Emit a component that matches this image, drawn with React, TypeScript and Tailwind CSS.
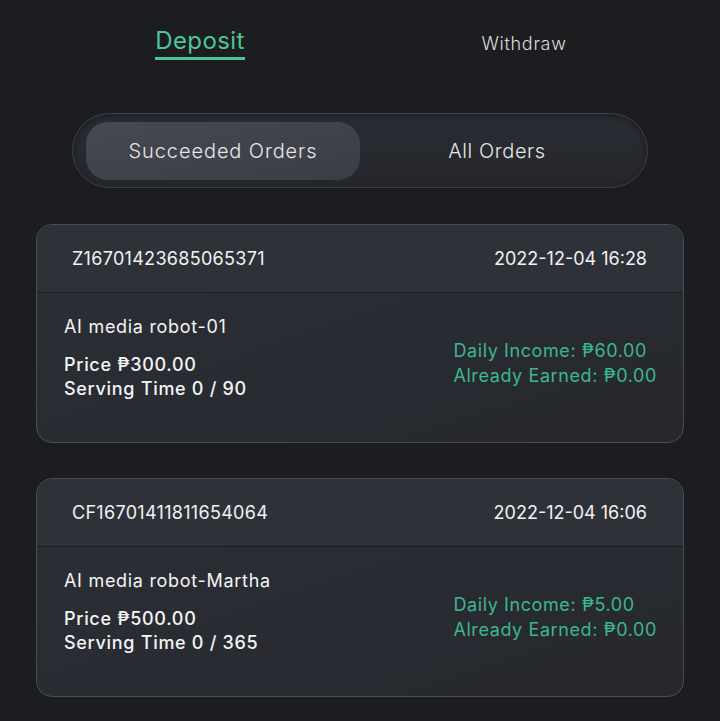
import { useState } from 'react'

type Order = {
  id: string
  date: string
  name: string
  price: string
  serving: string
  daily: string
  earned: string
}

const orders: Order[] = [
  {
    id: 'Z16701423685065371',
    date: '2022-12-04 16:28',
    name: 'AI media robot-01',
    price: '₱300.00',
    serving: '0 / 90',
    daily: '₱60.00',
    earned: '₱0.00',
  },
  {
    id: 'CF16701411811654064',
    date: '2022-12-04 16:06',
    name: 'AI media robot-Martha',
    price: '₱500.00',
    serving: '0 / 365',
    daily: '₱5.00',
    earned: '₱0.00',
  },
]

function OrderCard({ order }: { order: Order }) {
  return (
    <div className="overflow-hidden rounded-[16px] border border-[#4a4d55] bg-gradient-to-br from-[#2c2f36] to-[#26282e]">
      <div className="flex h-[68px] items-center justify-between border-b border-[#1b1c20] bg-[#2e3138] pl-[35px] pr-[36px] text-[18px] text-[#f2f2f2]">
        <span className="tracking-[0.3px]">{order.id}</span>
        <span>{order.date}</span>
      </div>
      <div className="flex h-[149px] items-start justify-between pl-[27px] pr-[26px] pt-[20px]">
        <div className="text-[18px] tracking-[0.7px] text-[#f4f4f4]">
          <div>{order.name}</div>
          <div className="mt-[13px] font-medium leading-[24px]">
            <div>Price {order.price}</div>
            <div>Serving Time {order.serving}</div>
          </div>
        </div>
        <div className="mt-[25px] text-[18px] leading-[25px] tracking-[0.6px] text-[#3cb78c]">
          <div>Daily Income: {order.daily}</div>
          <div>Already Earned: {order.earned}</div>
        </div>
      </div>
    </div>
  )
}

export default function App() {
  const [tab, setTab] = useState<'deposit' | 'withdraw'>('deposit')
  const [filter, setFilter] = useState<'succeeded' | 'all'>('succeeded')

  return (
    <div
      className="min-h-[721px] w-full bg-[#1c1d21] px-[36px] pb-[26px]"
      style={{ fontFamily: 'Inter, "Noto Sans", sans-serif' }}
    >
      <div className="flex h-[100px] items-start">
        <button
          onClick={() => setTab('deposit')}
          className="flex w-[328px] justify-center pt-[26px]"
        >
          <span
            className={
              tab === 'deposit'
                ? 'border-b-[3px] border-[#4fc496] pb-[1px] text-[24px] leading-[30px] tracking-[0.4px] text-[#4fc496]'
                : 'text-[18px] font-light text-[#d8d8d8]'
            }
          >
            Deposit
          </span>
        </button>
        <button
          onClick={() => setTab('withdraw')}
          className="flex flex-1 justify-center pt-[32px]"
        >
          <span
            className={
              tab === 'withdraw'
                ? 'border-b-[3px] border-[#4fc496] pb-[1px] text-[24px] text-[#4fc496]'
                : 'text-[18px] font-light leading-[24px] tracking-[0.7px] text-[#dcdcdc]'
            }
          >
            Withdraw
          </span>
        </button>
      </div>

      <div className="mx-[36px] mt-[13px] flex h-[75px] items-center rounded-full border border-[#3d4048] bg-gradient-to-b from-[#2a2c33] to-[#25272d] px-[13px] shadow-[inset_0_2px_6px_rgba(0,0,0,0.35)]">
        <button
          onClick={() => setFilter('succeeded')}
          className={`flex h-[58px] w-[274px] items-center justify-center rounded-[22px] text-[20px] font-light tracking-[0.9px] text-[#e6e6e6] ${
            filter === 'succeeded' ? 'bg-gradient-to-br from-[#464952] to-[#3a3d45]' : ''
          }`}
        >
          Succeeded Orders
        </button>
        <button
          onClick={() => setFilter('all')}
          className={`flex h-[58px] flex-1 items-center justify-center rounded-[22px] text-[20px] font-light tracking-[0.6px] text-[#e6e6e6] ${
            filter === 'all' ? 'bg-gradient-to-br from-[#464952] to-[#3a3d45]' : ''
          }`}
        >
          All Orders
        </button>
      </div>

      <div className="mt-[36px] flex flex-col gap-[35px]">
        {orders.map((o) => (
          <OrderCard key={o.id} order={o} />
        ))}
      </div>
    </div>
  )
}
